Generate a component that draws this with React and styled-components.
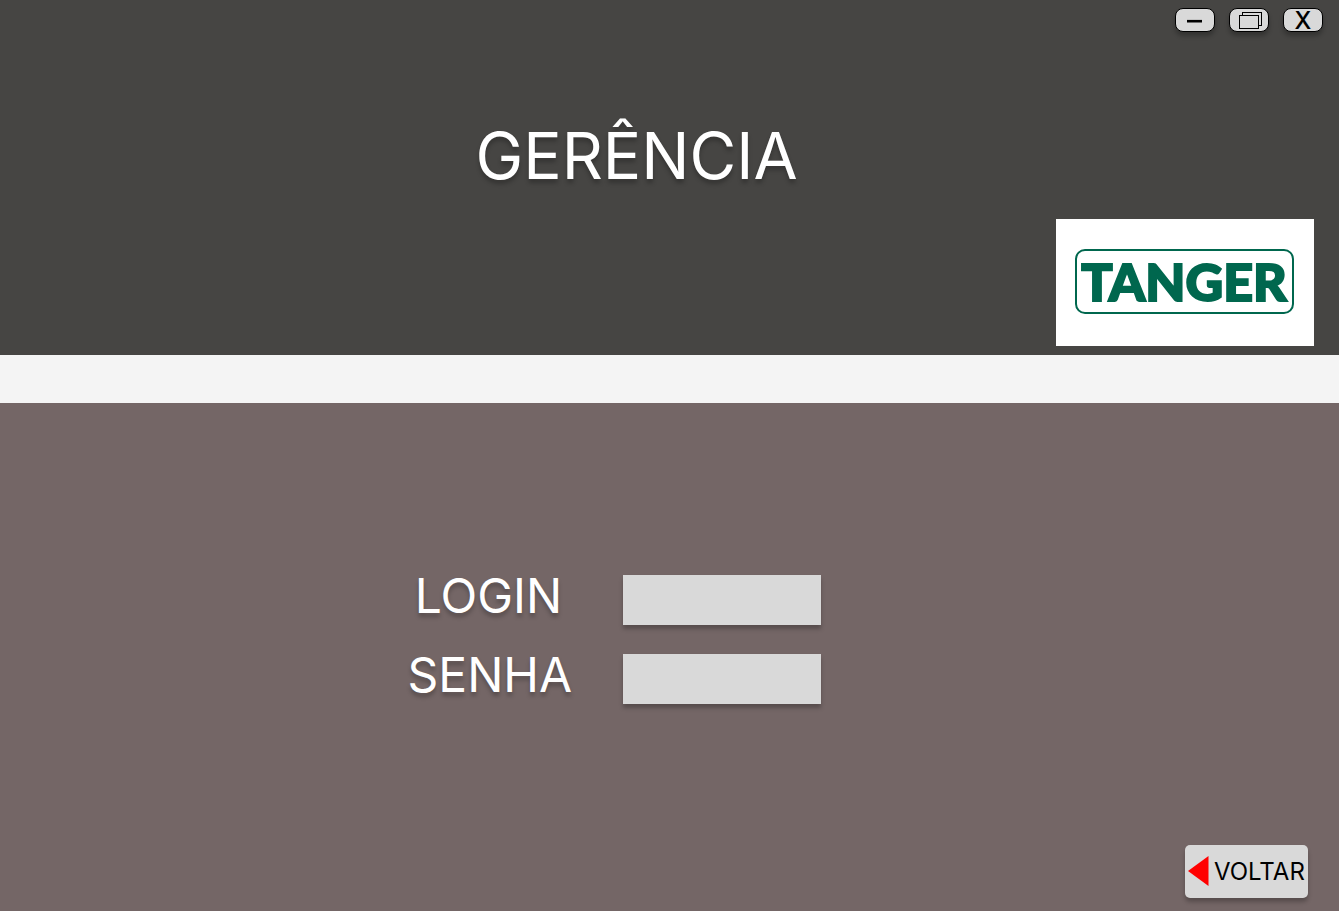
import React from "react";
import styled, { createGlobalStyle } from "styled-components";

const GlobalStyle = createGlobalStyle`
  * { box-sizing: border-box; }
  body {
    margin: 0;
    font-family: Inter, "Liberation Sans", sans-serif;
  }
`;

const Page = styled.div`
  display: flex;
  flex-direction: column;
  min-height: 100vh;
  background: #746666;
`;

const Header = styled.header`
  display: flex;
  flex-direction: column;
  background: #464543;
  padding-bottom: 9px;
`;

const WindowControls = styled.div`
  display: flex;
  justify-content: flex-end;
  gap: 14px;
  padding: 8px 16px;
`;

const WindowButton = styled.button`
  display: flex;
  align-items: center;
  justify-content: center;
  width: 40px;
  height: 24px;
  padding: 2px 0 0;
  border: 1px solid #000;
  border-radius: 8px;
  background: #d9d9d9;
  box-shadow: 0 4px 4px rgba(0, 0, 0, 0.25);
  color: #000;
  font-family: inherit;
  font-size: 24px;
  font-weight: 500;
  line-height: 24px;
`;

const Title = styled.h1`
  margin: 77px 0 24px;
  padding-right: 66px;
  color: #fff;
  font-size: 64px;
  font-weight: 400;
  line-height: 78px;
  text-align: center;
  text-shadow: 0 4px 4px rgba(0, 0, 0, 0.25);
`;

const Logo = styled.svg`
  align-self: flex-end;
  width: 258px;
  height: 127px;
  margin-right: 25px;
  background: #fff;
`;

const Band = styled.div`
  height: 48px;
  background: #f4f4f4;
`;

const Main = styled.main`
  display: flex;
  flex: 1;
  flex-direction: column;
  justify-content: space-between;
  padding: 172px 31px 13px;
`;

const LoginForm = styled.form`
  display: grid;
  grid-template-columns: 162px 198px;
  column-gap: 53px;
  row-gap: 29px;
  justify-content: center;
  padding-right: 111px;
`;

const Label = styled.label`
  color: #fff;
  font-size: 48px;
  line-height: 42px;
  text-align: center;
  white-space: nowrap;
  text-shadow: 0 4px 4px rgba(0, 0, 0, 0.25);
`;

const Field = styled.input`
  width: 100%;
  height: 50px;
  padding: 0 12px;
  border: 0;
  border-radius: 0;
  background: #d9d9d9;
  box-shadow: 0 4px 4px rgba(0, 0, 0, 0.25);
  font: 24px Inter, sans-serif;
`;

const BackButton = styled.button`
  display: flex;
  align-items: center;
  align-self: flex-end;
  gap: 5px;
  width: 123px;
  height: 53px;
  padding: 0 3px;
  border: 0;
  border-radius: 5px;
  background: #d9d9d9;
  box-shadow: 0 4px 4px rgba(0, 0, 0, 0.25);
  color: #000;
  font-family: inherit;
  font-size: 24px;
  line-height: 29px;
`;

export default function App() {
  return (
    <Page>
      <GlobalStyle />
      <Header>
        <WindowControls>
          <WindowButton type="button" aria-label="Minimizar">
            <svg width="38" height="20" aria-hidden="true">
              <path d="M11 10.2H26" stroke="#000" strokeWidth="2.6" />
            </svg>
          </WindowButton>
          <WindowButton type="button" aria-label="Restaurar">
            <svg width="38" height="20" fill="#d9d9d9" stroke="#000" aria-hidden="true">
              <rect x="12.5" y="1.5" width="19" height="13" />
              <rect x="9.5" y="4.5" width="19" height="13" />
            </svg>
          </WindowButton>
          <WindowButton type="button" aria-label="Fechar">X</WindowButton>
        </WindowControls>
        <Title>GERÊNCIA</Title>
        <Logo viewBox="0 0 258 127" role="img" aria-label="Tanger">
          <rect x="20" y="31" width="217" height="63" rx="9" fill="#fff" stroke="#00674e" strokeWidth="2" />
          <text
            x="128"
            y="82"
            textAnchor="middle"
            fill="#00674e"
            stroke="#00674e"
            strokeWidth="2"
            fontFamily="Lato, sans-serif"
            fontSize="52"
            fontWeight="900"
          >
            TANGER
          </text>
        </Logo>
      </Header>
      <Band />
      <Main>
        <LoginForm>
          <Label htmlFor="login">LOGIN</Label>
          <Field id="login" type="text" autoComplete="username" />
          <Label htmlFor="senha">SENHA</Label>
          <Field id="senha" type="password" autoComplete="current-password" />
        </LoginForm>
        <BackButton type="button">
          <svg width="21" height="31" viewBox="0 0 21 31" aria-hidden="true">
            <path d="M0 15L20.5 0V30Z" fill="#f00" />
          </svg>
          VOLTAR
        </BackButton>
      </Main>
    </Page>
  );
}
